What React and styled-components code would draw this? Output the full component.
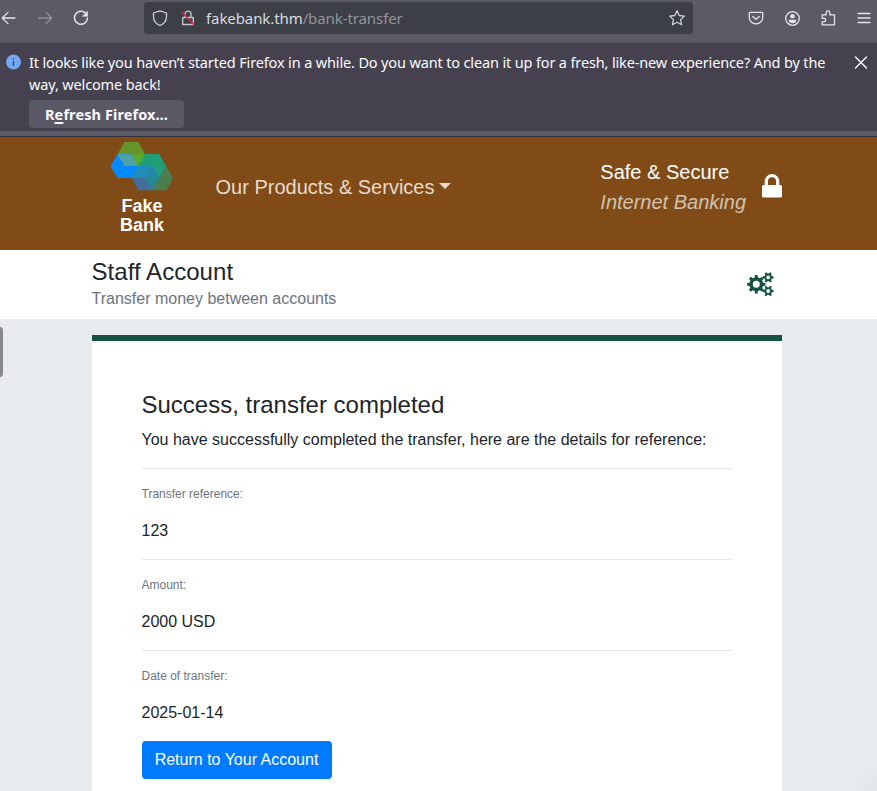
import React from "react";
import styled, { createGlobalStyle } from "styled-components";

const Global = createGlobalStyle`
  *, *::before, *::after { box-sizing: border-box; }
  html, body { margin: 0; height: 100%; overflow: hidden; }
  body { background: #e7ebee; color: #212529; font: 16px/24px "Liberation Sans", Arial, sans-serif; }
  p, h1, h2 { margin: 0; font-weight: 400; }
  svg { display: block; flex: none; }
`;

const Window = styled.div`
  position: relative;
  height: 791px;
  overflow: hidden;
  display: flex;
  flex-direction: column;
`;

const Toolbar = styled.div`
  height: 43px;
  flex: none;
  display: flex;
  align-items: flex-start;
  background: #5a5b66;
  border-bottom: 1px solid #4f4e5b;
  color: #e3e5ec;
`;

const NavButtons = styled.div`
  width: 144px;
  padding: 10px 0 0 1px;
  display: flex;
  gap: 20px;
`;

const AddressBar = styled.div`
  width: 549px;
  height: 32px;
  margin-top: 2px;
  padding: 0 8px;
  display: flex;
  align-items: center;
  background: #3d3f46;
  border-radius: 4px;
`;

const Url = styled.div`
  flex: 1;
  margin-left: 10px;
  font: 15px/20px "Noto Sans", sans-serif;
  letter-spacing: -0.09px;
  color: #d9dbe0;
`;

const UrlPath = styled.span`
  color: #92959b;
`;

const ShieldSlot = styled.div`
  margin-right: 12px;
`;

const ToolButtons = styled.div`
  padding: 10px 0 0 55px;
  display: flex;
  gap: 20px;
`;

const Notice = styled.div`
  height: 88px;
  flex: none;
  padding: 8px 8px 0 6px;
  display: flex;
  align-items: flex-start;
  background: #45414e;
  color: #fbfbfe;
  font-family: "Noto Sans", sans-serif;
`;

const NoticeIcon = styled.div`
  width: 23px;
  padding-top: 3px;
`;

const NoticeBody = styled.div`
  flex: 1;
`;

const NoticeLine = styled.p`
  font-size: 14.5px;
  line-height: 22px;
  white-space: nowrap;
  letter-spacing: -0.145px;
`;

const RefreshButton = styled.button`
  width: 155px;
  height: 28px;
  margin-top: 5px;
  padding: 0;
  border: 0;
  border-radius: 4px;
  background: #5b5866;
  color: #fbfbfe;
  font: 700 14.5px/28px "Noto Sans", sans-serif;
  letter-spacing: 0.1px;
  display: block;
  white-space: nowrap;
`;

const AccessKey = styled.span`
  text-decoration: underline;
  text-decoration-thickness: 2px;
  text-underline-offset: 2px;
`;

const CloseSlot = styled.div`
  padding-top: 4px;
`;

const ChromeEdge = styled.div`
  height: 6px;
  flex: none;
  background: #5a5b66;
  border-bottom: 1px solid #302f3a;
`;

const Masthead = styled.header`
  height: 113px;
  flex: none;
  padding: 5px 95px 0 92px;
  display: flex;
  align-items: flex-start;
  background: #804b16;
  color: #fff;
  font-size: 20px;
  line-height: 30px;
`;

const Brand = styled.div`
  width: 100px;
  display: flex;
  flex-direction: column;
  align-items: center;
  font-weight: 700;
  font-size: 18px;
  line-height: 19px;
  text-align: center;
`;

const BrandName = styled.div`
  margin-top: 6px;
`;

const MenuLink = styled.div`
  margin: 30px 0 0 23.5px;
  flex: 1;
  display: flex;
  align-items: center;
  gap: 5px;
  color: #e6dbd0;
`;

const Caret = styled.span`
  border: 6px solid transparent;
  border-top-color: currentColor;
  border-bottom: 0;
  margin-top: -2px;
`;

const Secure = styled.div`
  margin-top: 15px;
`;

const Tagline = styled.div`
  font-style: italic;
  color: #d3c2b1;
`;

const LockSlot = styled.div`
  margin: 32px 0 0 16px;
`;

const TitleBar = styled.section`
  height: 69px;
  flex: none;
  padding: 8px 102px 0 91.5px;
  display: flex;
  justify-content: space-between;
  background: #fff;
`;

const Title = styled.h1`
  font-size: 24px;
  line-height: 28.8px;
  letter-spacing: 0.05px;
`;

const Subtitle = styled.p`
  color: #6c757d;
`;

const CogSlot = styled.div`
  padding-top: 13px;
  color: #155343;
`;

const Panel = styled.main`
  flex: 1;
  width: 690px;
  margin: 16px 0 0 91.5px;
  padding: 50px 50px 0;
  background: #fff;
  border-top: 6px solid #155343;
`;

const Heading = styled.h2`
  font-size: 24px;
  line-height: 28.8px;
  margin-bottom: 8px;
`;

const Detail = styled.div`
  height: 91px;
  border-top: 1px solid #e5e5e5;
  padding-top: 16px;
`;

const Lead = styled.p`
  margin-bottom: 16px;
`;

const Label = styled.div`
  font-size: 12px;
  line-height: 18px;
  color: #6c757d;
  margin-bottom: 16px;
`;

const ReturnButton = styled.button`
  width: 190px;
  height: 38px;
  display: block;
  padding: 0;
  border: 0;
  border-radius: 4px;
  background: #007bff;
  color: #fff;
  font: 16px/24px "Liberation Sans", Arial, sans-serif;
`;

const SideHandle = styled.div`
  position: absolute;
  left: -4px;
  top: 327px;
  width: 7px;
  height: 50px;
  border-radius: 4px;
  background: #89898b;
`;

const CornerShade = styled.div`
  position: absolute;
  right: 0;
  bottom: 0;
  width: 24px;
  height: 24px;
  background: radial-gradient(circle at 100% 100%, #e0e4e7, #e7ebee 24px);
`;

const Glyph = ({ children, size = 16, width = 1.3, color = "currentColor" }) => (
  <svg width={size} height={size} viewBox="0 0 16 16" fill="none" stroke={color}
    strokeWidth={width} strokeLinecap="round" strokeLinejoin="round">{children}</svg>
);

const Logo = () => (
  <svg width="64" height="49" viewBox="0 0 64 49">
    <path d="M7.5 12.3 14.5 0H28.5L35 12.3 28.3 24H14.5Z" fill="#68942d" />
    <path d="M.5 24 7.5 12H21.5L28.3 24 21.5 36H7.5Z" fill="#0589ff" />
    <path d="M7.5 12.3H21.5L28.3 24H14.5Z" fill="#50a3a5" />
    <path d="M21.5 12.3H35L28.3 24Z" fill="#57ab28" />
    <path d="M56 24 63 36 56.5 48.3H42.5L49 36Z" fill="#4b7e4e" />
    <path d="M35 12H49L56 24 49 36H42.5L28.3 24Z" fill="#1e9f77" />
    <path d="M28.3 24H42.5L49 36 42.5 48.3H28.3L21.5 36Z" fill="#416e9a" />
    <path d="M28.3 24H42.5L35.5 36H21.5Z" fill="#218dbb" />
    <path d="M42.5 24 49 36H35.5Z" fill="#218aab" />
    <path d="M35.5 36H49L42.5 48.3Z" fill="#268891" />
  </svg>
);

const Lock = () => (
  <svg width="20" height="24" viewBox="0 0 20 24" fill="currentColor">
    <path d="M2.700 11V7.300a7.300 7.300 0 0 1 14.600 0V11h1.200q1.500 0 1.500 1.500v9.500q0 1.500-1.500 1.500h-17Q0 23.500 0 22v-9.500Q0 11 1.500 11ZM6 11h8V7.300a4 4 0 0 0-8 0Z" />
  </svg>
);

// Closed outline of a toothed wheel with a round hole, filled by even-odd.
const gearPath = (cx, cy, outer, inner, hole, teeth, turn = 0) => {
  const step = (2 * Math.PI) / teeth;
  const points = [];
  for (let i = 0; i < teeth; i += 1) {
    [[-0.29, inner], [-0.19, outer], [0.19, outer], [0.29, inner]].forEach(([t, r]) => {
      const a = (i + t + turn) * step;
      points.push(`${(cx + r * Math.cos(a)).toFixed(2)} ${(cy + r * Math.sin(a)).toFixed(2)}`);
    });
  }
  return `M${points.join("L")}ZM${cx - hole} ${cy}a${hole} ${hole} 0 1 0 ${2 * hole} 0a${hole} ${hole} 0 1 0 ${-2 * hole} 0Z`;
};

const Cogs = () => (
  <svg width="28" height="26" viewBox="0 0 28 26" fill="currentColor" fillRule="evenodd">
    <path d={gearPath(9.3, 13.3, 9.3, 7, 3.5, 8)} />
    <path d={gearPath(21.2, 6.4, 5.5, 3.9, 1.9, 6)} />
    <path d={gearPath(21.2, 20, 5.5, 3.9, 1.9, 6)} />
  </svg>
);

const details = [
  ["Transfer reference:", "123"],
  ["Amount:", "2000 USD"],
  ["Date of transfer:", "2025-01-14"],
];

export default function App() {
  return (
    <Window>
      <Global />
      <Toolbar>
        <NavButtons>
          <Glyph><path d="M14 8H1.2M7 2.4 1.2 8 7 13.6" /></Glyph>
          <Glyph color="#92939c"><path d="M1.5 8h13M9 2.4 14.8 8 9 13.6" /></Glyph>
          <Glyph width={1.5}>
            <path d="M12.700 3.300A6.500 6.500 0 1 0 14.500 8" />
            <path d="M14.500 1.500v4.800H9.800Z" fill="currentColor" strokeWidth=".6" />
          </Glyph>
        </NavButtons>
        <AddressBar>
          <ShieldSlot>
            <Glyph color="#cfd1d8"><path d="M8 .8 14.500 3v3.500C14.500 11 12 14 8 15.500 4 14 1.500 11 1.500 6.500V3Z" /></Glyph>
          </ShieldSlot>
          <Glyph color="#c6c8ce">
            <path d="M2.700 7.500h10.600v7H2.700ZM5 7.500V4.200a3 3 0 0 1 6 0v3.300" />
            <path d="M2 2.500 14.500 15.200" stroke="#e2204e" strokeWidth="1.4" />
          </Glyph>
          <Url>fakebank.thm<UrlPath>/bank-transfer</UrlPath></Url>
          <Glyph color="#cfd1d8"><path d="m8 .8 2.200 4.700 5.100.6-3.700 3.500 1 5.200L8 12.300l-4.600 2.500 1-5.200L.7 6.100l5.100-.6Z" /></Glyph>
        </AddressBar>
        <ToolButtons>
          <Glyph>
            <path d="M2.200 2.300h11.600q.9 0 .9.900v4.300a6.700 6.400 0 0 1-13.400 0V3.200q0-.9.900-.9Z" />
            <path d="M4.800 6.500 8 9.300l3.200-2.800" />
          </Glyph>
          <Glyph>
            <circle cx="8.500" cy="8.500" r="6.800" />
            <circle cx="8.500" cy="6.300" r="2.300" fill="currentColor" stroke="none" />
            <path d="M4.500 9.700h8q-.5 3.500-4 3.500t-4-3.500Z" fill="currentColor" stroke="none" />
          </Glyph>
          <Glyph>
            <path d="M2.200 6V4.800h4V2.700a1.800 1.800 0 0 1 3.600 0v2.100H14.500v10H2.200v-3H4a1.700 1.700 0 0 0 0-3.400H2.200Z" />
          </Glyph>
          <Glyph><path d="M2 3.500h12M2 8h12M2 12.500h12" /></Glyph>
        </ToolButtons>
      </Toolbar>
      <Notice>
        <NoticeIcon>
          <svg width="15" height="16" viewBox="0 0 15 16">
            <circle cx="7.500" cy="8" r="7.500" fill="#73a7f3" />
            <path d="M7.500 7v5M7.500 4v1.500" stroke="#45414e" strokeWidth="1.3" />
          </svg>
        </NoticeIcon>
        <NoticeBody>
          <NoticeLine>It looks like you haven’t started Firefox in a while. Do you want to clean it up for a fresh, like-new experience? And by the</NoticeLine>
          <NoticeLine>way, welcome back!</NoticeLine>
          <RefreshButton>R<AccessKey>e</AccessKey>fresh Firefox…</RefreshButton>
        </NoticeBody>
        <CloseSlot>
          <Glyph width={1.4}><path d="M2.500 2 13.500 13M13.500 2 2.500 13" /></Glyph>
        </CloseSlot>
      </Notice>
      <ChromeEdge />
      <Masthead>
        <Brand>
          <Logo />
          <BrandName>Fake<br />Bank</BrandName>
        </Brand>
        <MenuLink>Our Products &amp; Services<Caret /></MenuLink>
        <Secure>
          Safe &amp; Secure
          <Tagline>Internet Banking</Tagline>
        </Secure>
        <LockSlot><Lock /></LockSlot>
      </Masthead>
      <TitleBar>
        <div>
          <Title>Staff Account</Title>
          <Subtitle>Transfer money between accounts</Subtitle>
        </div>
        <CogSlot><Cogs /></CogSlot>
      </TitleBar>
      <Panel>
        <Heading>Success, transfer completed</Heading>
        <Lead>You have successfully completed the transfer, here are the details for reference:</Lead>
        {details.map(([label, value]) => (
          <Detail key={label}>
            <Label>{label}</Label>
            {value}
          </Detail>
        ))}
        <ReturnButton>Return to Your Account</ReturnButton>
      </Panel>
      <SideHandle />
      <CornerShade />
    </Window>
  );
}
